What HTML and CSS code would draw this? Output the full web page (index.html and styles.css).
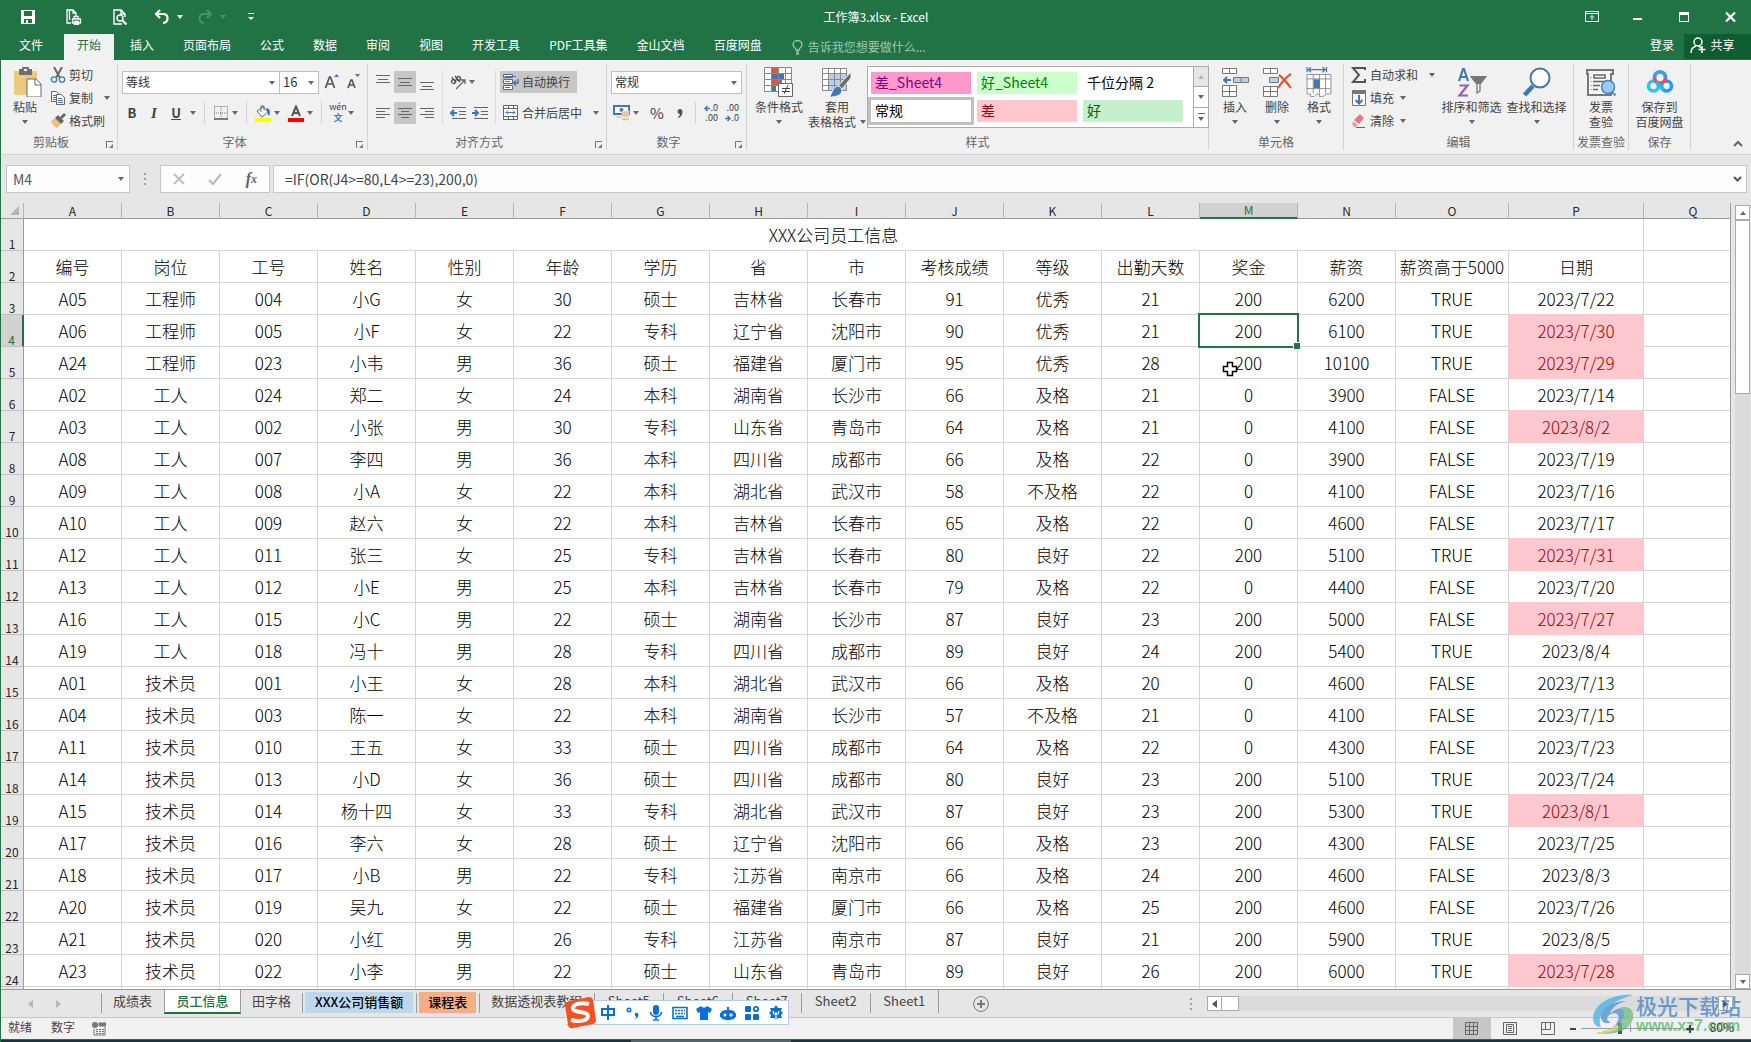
FILE: index.html
```html
<!DOCTYPE html>
<html lang="zh-CN">
<head>
<meta charset="utf-8">
<title>工作簿3.xlsx - Excel</title>
<link rel="stylesheet" href="styles.css">
</head>
<body>
<header class="titlebar">
  <div class="quick">
    <button class="ic" aria-label="保存"><svg width="16" height="16" viewBox="0 0 16 16"><path d="M1 1h14v14H1z" fill="#fff"/><path d="M4 2h8v5H4zM4 10h8v4H4z" fill="#217346"/><path d="M6 11h2v3H6z" fill="#fff"/></svg></button>
    <button class="ic" aria-label="打印预览"><svg width="16" height="16" viewBox="0 0 16 16" fill="none" stroke="#fff" stroke-width="1.3"><path d="M5 14H1V1h6l3 3v3M3.500 1v10M7 1v3h3"/><path d="M8 10V7.500h4V10M6.500 10h8v4h-8zM8.500 12.500h4v3h-4z"/></svg></button>
    <button class="ic" aria-label="查看"><svg width="16" height="16" viewBox="0 0 16 16" fill="none" stroke="#fff" stroke-width="1.400"><path d="M10 15H2V1h7l4 4v3M9 1v4h4"/><circle cx="8" cy="9" r="3"/><path d="M10 11l4.500 4.500" stroke-width="2.200"/></svg></button>
    <button class="ic undo" aria-label="撤消"><svg width="16" height="16" viewBox="0 0 16 16" fill="none" stroke="#fff" stroke-width="2.200"><path d="M6 1L2 5l4 4M2 5h7c6 0 6 8 0 9"/></svg></button>
    <i class="caret white"></i>
    <button class="ic redo" aria-label="恢复" disabled><svg width="16" height="16" viewBox="0 0 16 16" fill="none" stroke="#4f9069" stroke-width="2"><path d="M10 1l4 4-4 4M14 5H7c-6 0-6 8 0 9"/></svg></button>
    <i class="caret dim"></i>
    <button class="ic custom" aria-label="自定义快速访问工具栏"><svg width="6" height="8" viewBox="0 0 6 8"><path d="M0 0h6v1H0zM0 4h6L3 7z" fill="#fff"/></svg></button>
  </div>
  <h1 class="doc">工作簿3.xlsx - Excel</h1>
  <div class="winbtns">
    <button aria-label="功能区显示选项"><svg width="14" height="12" viewBox="0 0 14 12" fill="none" stroke="#fff"><path d="M.5.500h13v10H.5zM.5 2.500h13M7 9V5M5 6.500l2-2 2 2"/></svg></button>
    <button aria-label="最小化"><svg width="14" height="12" viewBox="0 0 14 12"><path d="M2 7h9v2H2z" fill="#fff"/></svg></button>
    <button aria-label="最大化"><svg width="14" height="12" viewBox="0 0 14 12"><path d="M2 1h10v10H2zM3 4v6h8V4z" fill="#fff" fill-rule="evenodd"/></svg></button>
    <button aria-label="关闭"><svg width="14" height="12" viewBox="0 0 14 12"><path d="M3 1.500l9 9M12 1.500l-9 9" stroke="#fff" stroke-width="2.200"/></svg></button>
  </div>
</header>

<nav class="tabs">
  <button class="tab file">文件</button>
  <button class="tab on">开始</button>
  <button class="tab">插入</button>
  <button class="tab">页面布局</button>
  <button class="tab">公式</button>
  <button class="tab">数据</button>
  <button class="tab">审阅</button>
  <button class="tab">视图</button>
  <button class="tab">开发工具</button>
  <button class="tab">PDF工具集</button>
  <button class="tab">金山文档</button>
  <button class="tab">百度网盘</button>
  <label class="tell"><svg width="12" height="15" viewBox="0 0 12 15" fill="none" stroke="#9fc7ae" stroke-width="1.300"><path d="M4 10c0-2-3-2.500-3-5.500a4.500 4 0 0 1 9 0C10 7.500 7 8 7 10zM4 12h3M4 14h3"/></svg><input type="text" placeholder="告诉我您想要做什么..." aria-label="告诉我您想要做什么"></label>
  <button class="login">登录</button>
  <button class="share"><svg width="16" height="17" viewBox="0 0 16 17" fill="none" stroke="#fff" stroke-width="1.500"><circle cx="8" cy="5" r="4"/><path d="M1 16c0-4 2-6 5-7M9 9l2 2M12 9v7M8.500 12.500h7"/></svg>共享</button>
</nav>

<section class="ribbon">
  <div class="group g-clip">
    <div class="body">
      <button class="big paste"><svg width="30" height="30" viewBox="0 0 30 30"><path d="M1 4h23v24H1z" fill="#edc87e"/><path d="M6 2h3a3 3 0 0 1 7 0h3v6H6z" fill="#6e6e6e"/><path d="M11 2h3v2h-3z" fill="#f1f1f1"/><path d="M14 12h9l5 5v13H14z" fill="#fff" stroke="#6e6e6e"/><path d="M22 12v6h6" fill="none" stroke="#6e6e6e"/></svg><span>粘贴</span><i class="caret"></i></button>
      <div class="stack">
        <button class="sm"><svg width="16" height="16" viewBox="0 0 16 16" fill="none"><path d="M4 0l6 11M12 0L6 11" stroke="#666" stroke-width="2"/><circle cx="4" cy="12.500" r="2.700" stroke="#3f78b5" stroke-width="1.300"/><circle cx="12" cy="12.500" r="2.700" stroke="#3f78b5" stroke-width="1.300"/></svg>剪切</button>
        <button class="sm"><svg width="16" height="16" viewBox="0 0 16 16" fill="#fff" stroke="#666"><path d="M1.500 1.500h5l2 2v8h-7z"/><path d="M3 5.500h3M3 7.500h3M3 9.500h3" stroke="#3f78b5"/><path d="M6.500 4.500h5l3 3v7h-8z"/><path d="M8 8.500h4M8 10.500h5M8 12.500h5" stroke="#3f78b5"/></svg>复制<i class="caret far"></i></button>
        <button class="sm"><svg width="16" height="16" viewBox="0 0 16 16"><path d="M1 8l4-3 6 6-4 4C5 14 2 11 1 8z" fill="#edc07a"/><path d="M5 5l3-3 6 6-3 3z" fill="#666"/><path d="M10 4l4-4 2 2-4 4z" fill="#666"/></svg>格式刷</button>
      </div>
    </div>
    <div class="cap more">剪贴板<button class="launch" aria-label="剪贴板选项"></button></div>
  </div>

  <div class="group g-font">
    <div class="body rows">
      <div class="row">
        <span class="combo fontname"><select aria-label="字体"><option>等线</option></select></span><span class="combo fontsize"><select aria-label="字号"><option>16</option></select></span>
        <button class="ib grow" aria-label="增大字号"><svg width="16" height="16" viewBox="0 0 16 16"><path d="M1.500 14L5.500 3h1l4 11M3 10h6" fill="none" stroke="#555" stroke-width="1.700"/><path d="M10 3h5l-2.500-3z" fill="#3f78b5"/></svg></button>
        <button class="ib" aria-label="减小字号"><svg width="16" height="16" viewBox="0 0 16 16"><path d="M2 14l3-8h1l3 8M3 11h5" fill="none" stroke="#555" stroke-width="1.600"/><path d="M9 0h5l-2.500 3z" fill="#3f78b5"/></svg></button>
      </div>
      <div class="row">
        <button class="ib b">B</button><button class="ib i">I</button><button class="ib u">U</button><i class="caret"></i>
        <span class="sep"></span>
        <button class="ib" aria-label="边框"><svg width="14" height="14" viewBox="0 0 14 14"><path d="M.5.500h13v13M.5.500v13M7 0v13M0 7h13" fill="none" stroke="#777" stroke-dasharray="1 1"/><path d="M0 13h14" stroke="#555" stroke-width="1.500"/></svg></button><i class="caret"></i>
        <span class="sep"></span>
        <button class="ib" aria-label="填充颜色"><svg width="16" height="17" viewBox="0 0 16 17"><path d="M2 6l6-4 5 5-6 5z" fill="#fff" stroke="#666"/><path d="M6 7V1h3v4" fill="none" stroke="#666"/><path d="M11 3c4 0 5 4 3 8-1 0-1-3-3-8z" fill="#3f78b5"/><path d="M0 13h16v4H0z" fill="#ff0"/></svg></button><i class="caret"></i>
        <button class="ib fc" aria-label="字体颜色"><svg width="16" height="17" viewBox="0 0 16 17"><path d="M4 11L8 1.500 12 11M5.500 8h5" fill="none" stroke="#555" stroke-width="2"/><path d="M0 13h16v4H0z" fill="red"/></svg></button><i class="caret"></i>
        <span class="sep"></span>
        <button class="ib wen" aria-label="拼音指南"><small>wén</small><small class="zh">文</small></button><i class="caret"></i>
      </div>
    </div>
    <div class="cap more">字体<button class="launch" aria-label="字体选项"></button></div>
  </div>

  <div class="group g-align">
    <div class="body">
      <div class="rows">
        <div class="row">
          <button class="ab" aria-label="顶端对齐"><svg width="14" height="16" viewBox="0 0 14 16" stroke="#666"><path d="M0 1.500h14M2 5.500h10M0 8.500h14"/></svg></button>
          <button class="ab on" aria-label="垂直居中"><svg width="14" height="16" viewBox="0 0 14 16" stroke="#666"><path d="M0 4.500h14M2 8.500h10M0 11.500h14"/></svg></button>
          <button class="ab" aria-label="底端对齐"><svg width="14" height="16" viewBox="0 0 14 16" stroke="#666"><path d="M0 8.500h14M2 12.500h10M0 15.500h14"/></svg></button>
        </div>
        <div class="row">
          <button class="ab" aria-label="左对齐"><svg width="14" height="16" viewBox="0 0 14 16" stroke="#666"><path d="M0 3.500h14M0 6.500h9M0 9.500h14M0 12.500h9"/></svg></button>
          <button class="ab on" aria-label="居中"><svg width="14" height="16" viewBox="0 0 14 16" stroke="#666"><path d="M0 3.500h14M3 6.500h8M0 9.500h14M3 12.500h8"/></svg></button>
          <button class="ab" aria-label="右对齐"><svg width="14" height="16" viewBox="0 0 14 16" stroke="#666"><path d="M0 3.500h14M5 6.500h9M0 9.500h14M5 12.500h9"/></svg></button>
        </div>
      </div>
      <span class="vsep"></span>
      <div class="rows">
        <div class="row">
          <button class="ab" aria-label="方向"><svg width="16" height="16" viewBox="0 0 16 16" fill="none" stroke="#555" stroke-width="1.300"><circle cx="3.500" cy="7.500" r="2"/><path d="M2 3l4 6M5 2l5 6"/><circle cx="8.500" cy="4.500" r="2"/><path d="M6 15l9-9M11 6h4v4" stroke="#666"/></svg></button><i class="caret"></i>
        </div>
        <div class="row">
          <button class="ab" aria-label="减少缩进"><svg width="16" height="14" viewBox="0 0 16 14"><path d="M2 1.500h14M9 5.500h7M9 8.500h7M2 12.500h14" stroke="#666"/><path d="M7 7H1M4 4L1 7l3 3" fill="none" stroke="#3f78b5" stroke-width="2"/></svg></button>
          <button class="ab" aria-label="增加缩进"><svg width="16" height="14" viewBox="0 0 16 14"><path d="M2 1.500h14M9 5.500h7M9 8.500h7M2 12.500h14" stroke="#666"/><path d="M0 7h6M3 4l3 3-3 3" fill="none" stroke="#3f78b5" stroke-width="2"/></svg></button>
        </div>
      </div>
      <span class="vsep"></span>
      <div class="rows">
        <button class="sm wrap on"><svg width="16" height="16" viewBox="0 0 16 16" fill="#fff" stroke="#666"><path d="M.5.500h9v3h-9zM.5 5.500h9v4h-9zM.5 11.500h9v4h-9z"/><path d="M2 2.500h11M2 7.500h5M2 13.500h5" stroke="#3f78b5"/><path d="M15 5v4h-4M13 6.500L10.500 9l2.500 2.500" fill="none" stroke="#3f78b5" stroke-width="1.500"/></svg>自动换行</button>
        <button class="sm wrap"><svg width="16" height="16" viewBox="0 0 16 16" fill="#fff" stroke="#666"><path d="M.5.500h14v14H.5zM.5 3.500h14M.5 11.500h14M5.500.500v3M10.500.500v3M5.500 11.500v3M10.500 11.500v3"/><path d="M3 7.500h9M5 5.500l-2 2 2 2M10 5.500l2 2-2 2" fill="none" stroke="#3f78b5"/></svg>合并后居中<i class="caret far"></i></button>
      </div>
    </div>
    <div class="cap more">对齐方式<button class="launch" aria-label="对齐选项"></button></div>
  </div>

  <div class="group g-num">
    <div class="body rows">
      <div class="row"><span class="combo numfmt"><select aria-label="数字格式"><option>常规</option></select></span></div>
      <div class="row">
        <button class="ib" aria-label="会计数字格式"><svg width="18" height="16" viewBox="0 0 18 16"><path d="M1 1h15v8H1z" fill="#fff" stroke="#3f78b5" stroke-width="2"/><circle cx="8.500" cy="5" r="2" fill="#3f78b5"/><path d="M9 6h7v2.500H9zM9 9.500h7V12H9zM9 13h7v2.500H9zM3 11h6v2H3z" fill="#edc07a" stroke="#f1f1f1" stroke-width=".6"/></svg></button><i class="caret"></i>
        <button class="ib pct">%</button><button class="ib comma" aria-label="千位分隔样式"><svg width="6" height="9" viewBox="0 0 6 9"><path d="M3 0a2.500 2.500 0 0 1 2.500 3C5.500 6 4 8 1.500 9L1 8c1-.8 2-1.800 2-3A2.500 2.500 0 0 1 3 0z" fill="#555"/></svg></button>
        <span class="sep"></span>
        <button class="ib dec" aria-label="增加小数位数"><small><svg width="6" height="7" viewBox="0 0 6 7"><path d="M6 3.500H1M3.500 1L1 3.500 3.500 6" fill="none" stroke="#3f78b5" stroke-width="1.500"/></svg>.0</small><small>.00</small></button>
        <button class="ib dec" aria-label="减少小数位数"><small>.00</small><small><svg width="6" height="7" viewBox="0 0 6 7"><path d="M0 3.500h5M2.500 1L5 3.500 2.500 6" fill="none" stroke="#3f78b5" stroke-width="1.500"/></svg>.0</small></button>
      </div>
    </div>
    <div class="cap more">数字<button class="launch" aria-label="数字选项"></button></div>
  </div>

  <div class="group g-style">
    <div class="body">
      <button class="big cond"><svg width="30" height="30" viewBox="0 0 30 30"><path d="M.5.500h27v24H.5z" fill="#fff"/><path d="M8 1h6v5H8zM8 13h10v5H8z" fill="#d95b3a"/><path d="M8 7h12v5H8zM8 19h4v6H8z" fill="#3f78b5"/><path d="M.5.500h27v24H.5zM7.500.500v24M14.500.500v24M21.500.500v24M.5 6.500h27M.5 12.500h27M.5 18.500h27" fill="none" stroke="#888"/><path d="M14.500 16.500h14v13h-14z" fill="#fff" stroke="#666"/><path d="M18 21.500h8M18 24.500h8M24 18l-4 9" stroke="#444" fill="none"/></svg><span>条件格式</span><i class="caret"></i></button>
      <button class="big fmt"><svg width="30" height="30" viewBox="0 0 30 30"><path d="M.5 1.500h24v22H.5z" fill="#fff"/><path d="M6 7h19v17H6z" fill="#b9cfe8"/><path d="M.5 1.500h24v22H.5zM6.500 1.500v22M12.500 1.500v22M18.500 1.500v22M.5 6.500h24M.5 12.500h24M.5 18.500h24" fill="none" stroke="#888"/><path d="M29 5v6l-9 11-4-3z" fill="#6e6e6e" stroke="#f1f1f1"/><path d="M15 19c3 0 5 2 5 5-1 4-5 6-13 6 3-2 3-9 8-11z" fill="#3f78b5" stroke="#f1f1f1"/></svg><span>套用</span><span class="two">表格格式<i class="caret"></i></span></button>
      <div class="gallery">
        <div class="cells">
          <button class="st bad4">差_Sheet4</button><button class="st good4">好_Sheet4</button><button class="st">千位分隔 2</button>
          <button class="st sel">常规</button><button class="st bad">差</button><button class="st good">好</button>
        </div>
        <div class="gscroll"><button disabled aria-label="上"><i class="caret up"></i></button><button aria-label="下"><i class="caret"></i></button><button aria-label="其他"><i class="bar"></i><i class="caret"></i></button></div>
      </div>
    </div>
    <div class="cap">样式</div>
  </div>

  <div class="group g-cells">
    <div class="body">
      <button class="big"><svg width="30" height="30" viewBox="0 0 30 30" fill="#fff" stroke="#777"><path d="M2.500 1.500h14v5h-14zM9.500 1.500v5M2.500 18.500h14v11h-14zM9.500 18.500v11M2.500 24.500h14"/><path d="M13.500 10.500h15v5h-15zM21 10.500v5" fill="#b9cfe8"/><path d="M11 13H4M7 10l-3 3 3 3" fill="none" stroke="#3f78b5" stroke-width="1.800"/></svg><span>插入</span><i class="caret"></i></button>
      <button class="big"><svg width="30" height="30" viewBox="0 0 30 30" fill="#fff" stroke="#777"><path d="M1.500 1.500h14v5h-14zM8.500 1.500v5M1.500 19.500h14v10h-14zM8.500 19.500v10M1.500 24.500h14"/><path d="M7.500 10.500h9v5h-9z" fill="#b9cfe8"/><path d="M17 8c4 3 9 9 12 13M29 7c-5 3-9 8-13 14" fill="none" stroke="#d95b3a" stroke-width="2.200"/></svg><span>删除</span><i class="caret"></i></button>
      <button class="big"><svg width="30" height="34" viewBox="0 0 30 34" fill="#fff" stroke="#888"><path d="M1.500 0v6M23.500 0v6M3 3h19M6 0L3 3l3 3M19 0l3 3-3 3" fill="none" stroke="#3f78b5" stroke-width="1.400"/><path d="M1.500 8.500h27v22h-5l-4 3h-4v-3h-3l-3 3h-4v-3h-4zM8.500 8v22M15.500 8v22M22.500 8v22M1 13.500h27M1 24.500h27"/><path d="M9 14h7v10H9z" fill="#3f78b5" stroke="none"/></svg><span>格式</span><i class="caret"></i></button>
    </div>
    <div class="cap">单元格</div>
  </div>

  <div class="group g-edit">
    <div class="body">
      <div class="stack">
        <button class="sm"><svg width="16" height="16" viewBox="0 0 16 16"><path d="M14 3V1H2l6 7-6 7h12v-3" fill="none" stroke="#555" stroke-width="2"/></svg>自动求和<i class="caret far"></i></button>
        <button class="sm"><svg width="16" height="16" viewBox="0 0 16 16"><path d="M1.500.500h13v15h-13z" fill="#fff" stroke="#777"/><path d="M1 0h14v4H1z" fill="#777"/><path d="M8 5v8M4.500 10L8 13.500 11.500 10" fill="none" stroke="#3f78b5" stroke-width="2"/></svg>填充<i class="caret"></i></button>
        <button class="sm"><svg width="16" height="16" viewBox="0 0 16 16"><path d="M9 1l4 4-5 6-5-4z" fill="#e2788a"/><path d="M2.500 8L7 12l-2 2H3l-2-3z" fill="#ef9fab"/><path d="M5 14.500h9" stroke="#666"/></svg>清除<i class="caret"></i></button>
      </div>
      <button class="big wide"><svg width="32" height="30" viewBox="0 0 32 30" fill="none"><path d="M3 14L7 2h1l4 12M4.500 10h6" stroke="#3f78b5" stroke-width="2.200"/><path d="M3.500 18.500h8l-8 10h8.500" stroke="#9260b5" stroke-width="2.200"/><path d="M14 9h17l-6 8H20z" fill="#777"/><path d="M15 9.500l6 7V26l3-2v-8l6-6.500" stroke="#777" stroke-width="1.300"/></svg><span>排序和筛选</span><i class="caret"></i></button>
      <button class="big wide"><svg width="30" height="30" viewBox="0 0 30 30"><path d="M11 19L2.500 28" stroke="#3f78b5" stroke-width="4.500"/><circle cx="18" cy="11" r="9.500" fill="#fff" stroke="#3f78b5" stroke-width="2"/></svg><span>查找和选择</span><i class="caret"></i></button>
    </div>
    <div class="cap">编辑</div>
  </div>

  <div class="group g-inv">
    <div class="body"><button class="big"><svg width="32" height="30" viewBox="0 0 32 30"><path d="M2 3h26v4h-2v21H3V7H2z" fill="#f6f6f6" stroke="#777" stroke-width="2"/><path d="M9 8h11v3H9z" fill="#fff" stroke="#666" stroke-width="1.500"/><path d="M8 14.500h12M8 18.500h7M8 22.500h5" stroke="#666" stroke-width="1.500"/><path d="M6 10v15" stroke="#777" stroke-dasharray="1 3"/><circle cx="23" cy="20" r="6.500" fill="#9cc9f7" stroke="#4a86ba" stroke-width="1.500"/><path d="M27 25l3.500 3.500" stroke="#4a86ba" stroke-width="2"/></svg><span>发票</span><span class="two">查验</span></button></div>
    <div class="cap">发票查验</div>
  </div>
  <div class="group g-save">
    <div class="body"><button class="big"><svg width="30" height="30" viewBox="0 0 30 30" fill="none" stroke-width="3.600"><circle cx="8.500" cy="19" r="5" stroke="#38bdf0"/><circle cx="21.500" cy="19" r="5" stroke="#1f9cf5"/><circle cx="15" cy="10.500" r="5.500" stroke="#ee4a68"/><path d="M9.500 10.500a5.500 5.500 0 0 1 11 0" stroke="#2ea5ef"/><path d="M11 15l8 8" stroke="#2db4f3"/></svg><span>保存到</span><span class="two">百度网盘</span></button></div>
    <div class="cap">保存</div>
  </div>
  <button class="collapse" aria-label="折叠功能区"><svg width="10" height="7" viewBox="0 0 10 7"><path d="M1 6l4-4 4 4" fill="none" stroke="#666" stroke-width="2"/></svg></button>
</section>

<section class="formula">
  <span class="namebox"><input type="text" value="M4" aria-label="名称框"><i class="caret"></i></span>
  <i class="dots"></i>
  <div class="fbtns">
    <button aria-label="取消"><svg width="12" height="12" viewBox="0 0 12 12"><path d="M1 1l10 10M11 1L1 11" stroke="#bbb" stroke-width="1.800"/></svg></button>
    <button aria-label="输入"><svg width="14" height="12" viewBox="0 0 14 12"><path d="M1 7l4 4 8-10" fill="none" stroke="#bbb" stroke-width="2.200"/></svg></button>
    <button class="fx" aria-label="插入函数">f<sub>x</sub></button>
  </div>
  <div class="fedit"><input type="text" value="=IF(OR(J4&gt;=80,L4&gt;=23),200,0)" aria-label="编辑栏"><svg width="9" height="6" viewBox="0 0 9 6"><path d="M1 1l3.500 3.500L8 1" fill="none" stroke="#555" stroke-width="2"/></svg></div>
</section>

<main class="work">
  <div class="grid">
<table>
<colgroup><col class="c-head"><col class="c" span="14"><col class="c-o"><col class="c-p"><col></colgroup>
<thead><tr><th class="corner"><svg width="10" height="9" viewBox="0 0 10 9"><path d="M9 0v9H0z" fill="#b5b5b5"/></svg><th>A<th>B<th>C<th>D<th>E<th>F<th>G<th>H<th>I<th>J<th>K<th>L<th class="cur">M<th>N<th>O<th>P<th>Q</tr></thead>
<tbody>
<tr><th>1<td colspan="16">XXX公司员工信息<td></tr>
<tr><th>2<td>编号<td>岗位<td>工号<td>姓名<td>性别<td>年龄<td>学历<td>省<td>市<td>考核成绩<td>等级<td>出勤天数<td>奖金<td>薪资<td>薪资高于5000<td>日期<td></tr>
<tr><th>3<td>A05<td>工程师<td>004<td>小G<td>女<td>30<td>硕士<td>吉林省<td>长春市<td>91<td>优秀<td>21<td>200<td>6200<td>TRUE<td>2023/7/22<td></tr>
<tr><th class="cur">4<td>A06<td>工程师<td>005<td>小F<td>女<td>22<td>专科<td>辽宁省<td>沈阳市<td>90<td>优秀<td>21<td class="active">200<td>6100<td>TRUE<td class="hot">2023/7/30<td></tr>
<tr><th>5<td>A24<td>工程师<td>023<td>小韦<td>男<td>36<td>硕士<td>福建省<td>厦门市<td>95<td>优秀<td>28<td class="point">200<svg class="pointer" width="16" height="16" viewBox="0 0 16 16"><path d="M5.500 1.500h5v4h4v5h-4v4h-5v-4h-4v-5h4z" fill="#fff" stroke="#000" stroke-width="1.500"/></svg><td>10100<td>TRUE<td class="hot">2023/7/29<td></tr>
<tr><th>6<td>A02<td>工人<td>024<td>郑二<td>女<td>24<td>本科<td>湖南省<td>长沙市<td>66<td>及格<td>21<td>0<td>3900<td>FALSE<td>2023/7/14<td></tr>
<tr><th>7<td>A03<td>工人<td>002<td>小张<td>男<td>30<td>专科<td>山东省<td>青岛市<td>64<td>及格<td>21<td>0<td>4100<td>FALSE<td class="hot">2023/8/2<td></tr>
<tr><th>8<td>A08<td>工人<td>007<td>李四<td>男<td>36<td>本科<td>四川省<td>成都市<td>66<td>及格<td>22<td>0<td>3900<td>FALSE<td>2023/7/19<td></tr>
<tr><th>9<td>A09<td>工人<td>008<td>小A<td>女<td>22<td>本科<td>湖北省<td>武汉市<td>58<td>不及格<td>22<td>0<td>4100<td>FALSE<td>2023/7/16<td></tr>
<tr><th>10<td>A10<td>工人<td>009<td>赵六<td>女<td>22<td>本科<td>吉林省<td>长春市<td>65<td>及格<td>22<td>0<td>4600<td>FALSE<td>2023/7/17<td></tr>
<tr><th>11<td>A12<td>工人<td>011<td>张三<td>女<td>25<td>专科<td>吉林省<td>长春市<td>80<td>良好<td>22<td>200<td>5100<td>TRUE<td class="hot">2023/7/31<td></tr>
<tr><th>12<td>A13<td>工人<td>012<td>小E<td>男<td>25<td>本科<td>吉林省<td>长春市<td>79<td>及格<td>22<td>0<td>4400<td>FALSE<td>2023/7/20<td></tr>
<tr><th>13<td>A16<td>工人<td>015<td>小C<td>男<td>22<td>硕士<td>湖南省<td>长沙市<td>87<td>良好<td>23<td>200<td>5000<td>FALSE<td class="hot">2023/7/27<td></tr>
<tr><th>14<td>A19<td>工人<td>018<td>冯十<td>男<td>28<td>专科<td>四川省<td>成都市<td>89<td>良好<td>24<td>200<td>5400<td>TRUE<td>2023/8/4<td></tr>
<tr><th>15<td>A01<td>技术员<td>001<td>小王<td>女<td>28<td>本科<td>湖北省<td>武汉市<td>66<td>及格<td>20<td>0<td>4600<td>FALSE<td>2023/7/13<td></tr>
<tr><th>16<td>A04<td>技术员<td>003<td>陈一<td>女<td>22<td>本科<td>湖南省<td>长沙市<td>57<td>不及格<td>21<td>0<td>4100<td>FALSE<td>2023/7/15<td></tr>
<tr><th>17<td>A11<td>技术员<td>010<td>王五<td>女<td>33<td>硕士<td>四川省<td>成都市<td>64<td>及格<td>22<td>0<td>4300<td>FALSE<td>2023/7/23<td></tr>
<tr><th>18<td>A14<td>技术员<td>013<td>小D<td>女<td>36<td>硕士<td>四川省<td>成都市<td>80<td>良好<td>23<td>200<td>5100<td>TRUE<td>2023/7/24<td></tr>
<tr><th>19<td>A15<td>技术员<td>014<td>杨十四<td>女<td>33<td>专科<td>湖北省<td>武汉市<td>87<td>良好<td>23<td>200<td>5300<td>TRUE<td class="hot">2023/8/1<td></tr>
<tr><th>20<td>A17<td>技术员<td>016<td>李六<td>女<td>28<td>硕士<td>辽宁省<td>沈阳市<td>66<td>及格<td>23<td>200<td>4300<td>FALSE<td>2023/7/25<td></tr>
<tr><th>21<td>A18<td>技术员<td>017<td>小B<td>男<td>22<td>专科<td>江苏省<td>南京市<td>66<td>及格<td>24<td>200<td>4600<td>FALSE<td>2023/8/3<td></tr>
<tr><th>22<td>A20<td>技术员<td>019<td>吴九<td>女<td>22<td>硕士<td>福建省<td>厦门市<td>66<td>及格<td>25<td>200<td>4600<td>FALSE<td>2023/7/26<td></tr>
<tr><th>23<td>A21<td>技术员<td>020<td>小红<td>男<td>26<td>专科<td>江苏省<td>南京市<td>87<td>良好<td>21<td>200<td>5900<td>TRUE<td>2023/8/5<td></tr>
<tr><th>24<td>A23<td>技术员<td>022<td>小李<td>男<td>22<td>硕士<td>山东省<td>青岛市<td>89<td>良好<td>26<td>200<td>6000<td>TRUE<td class="hot">2023/7/28<td></tr>
<tr><th><td><td><td><td><td><td><td><td><td><td><td><td><td><td><td><td><td></tr>
</tbody>
</table>
  </div>
  <div class="vscroll"><button aria-label="向上滚动"><i class="caret up"></i></button><span class="thumb"></span><button class="down" aria-label="向下滚动"><i class="caret"></i></button></div>
</main>

<nav class="sheets">
  <div class="nav"><button aria-label="上一个"><svg width="5" height="8" viewBox="0 0 5 8"><path d="M5 0v8L0 4z" fill="#b5b5b5"/></svg></button><button aria-label="下一个"><svg width="5" height="8" viewBox="0 0 5 8"><path d="M0 0v8l5-4z" fill="#b5b5b5"/></svg></button></div>
  <button class="sheet">成绩表</button>
  <button class="sheet cur">员工信息</button>
  <button class="sheet">田字格</button>
  <button class="sheet blue"><span>XXX公司销售额</span></button>
  <button class="sheet orange"><span>课程表</span></button>
  <button class="sheet">数据透视表教程</button>
  <button class="sheet n">Sheet5</button>
  <button class="sheet n">Sheet6</button>
  <button class="sheet n">Sheet7</button>
  <button class="sheet n">Sheet2</button>
  <button class="sheet n last">Sheet1</button>
  <button class="add" aria-label="新工作表"><svg width="16" height="16" viewBox="0 0 16 16" fill="none" stroke="#777"><circle cx="8" cy="8" r="7.400"/><path d="M8 4v8M4 8h8" stroke-width="2"/></svg></button>
  <i class="dots"></i>
  <div class="hscroll"><button aria-label="向左滚动"><svg width="5" height="8" viewBox="0 0 5 8"><path d="M5 0v8L0 4z" fill="#555"/></svg></button><span class="thumb"></span><button class="right" aria-label="向右滚动"><svg width="5" height="8" viewBox="0 0 5 8"><path d="M0 0v8l5-4z" fill="#555"/></svg></button></div>
</nav>

<footer class="status">
  <span>就绪</span><span>数字</span>
  <svg class="macro" width="14" height="14" viewBox="0 0 14 14"><circle cx="3" cy="3" r="3" fill="#777"/><path d="M7 1h7v3H7zM2 7v6h11V5" fill="none" stroke="#777"/><path d="M7 1h7v3H7z" fill="#777"/><path d="M4 7.500h8M4 9.500h8M4 11.500h8" stroke="#777" stroke-dasharray="2 1"/></svg>
  <div class="views">
    <button class="on" aria-label="普通"><svg width="13" height="13" viewBox="0 0 13 13" fill="none" stroke="#666"><path d="M.5.500h12v12H.5zM4.500 0v13M8.500 0v13M0 4.500h13M0 8.500h13"/></svg></button>
    <button aria-label="页面布局"><svg width="14" height="13" viewBox="0 0 14 13" fill="none" stroke="#666"><path d="M.5.500h13v12H.5zM3.500 2.500h7v8h-7zM5 4.500h4M5 6.500h4M5 8.500h4"/></svg></button>
    <button aria-label="分页预览"><svg width="14" height="13" viewBox="0 0 14 13" fill="none" stroke="#666"><path d="M.5.500h13v12H.5zM4.500.500v7M.5 7.500h8.500M9.500.500v7"/></svg></button>
  </div>
  <button class="z" aria-label="缩小"><svg width="8" height="8" viewBox="0 0 8 8"><path d="M1 3h6v2H1z" fill="#444"/></svg></button>
  <input class="zoom" type="range" min="10" max="190" value="80" aria-label="显示比例">
  <button class="z" aria-label="放大"><svg width="8" height="8" viewBox="0 0 8 8"><path d="M0 4h8M4 0v8" stroke="#444" stroke-width="2"/></svg></button>
  <button class="pc">80%</button>
</footer>
<div class="desk"><span></span></div>

<div class="ime">
  <svg class="slogo" width="32" height="32" viewBox="0 0 32 32"><path d="M5 4l20-4q3 0 4 3l3 20q0 3-3 4L9 31q-4 1-5-3L1 8q0-3 4-4z" fill="#f4511e"/><path d="M25 7C17 5 8 7 9 12c1 4 15 2 15 7 0 5-9 6-17 4" fill="none" stroke="#fff" stroke-width="4"/></svg>
  <svg width="16" height="16" viewBox="0 0 16 16" fill="none" stroke="#0a6fd8" stroke-width="2"><path d="M2 4h12v6H2zM8 0v15"/></svg>
  <svg width="16" height="16" viewBox="0 0 16 16"><circle cx="5" cy="5" r="1.700" fill="none" stroke="#0a6fd8" stroke-width="1.600"/><path d="M11 8h3c1 3 0 5-3 6 1-1 1.500-2 1-3h-1z" fill="#0a6fd8"/></svg>
  <svg width="16" height="16" viewBox="0 0 16 16"><path d="M5 3a3 3 0 0 1 6 0v4a3 3 0 0 1-6 0z" fill="#0a6fd8"/><path d="M2.500 7c0 6 11 6 11 0M8 11v3M5 15h6" fill="none" stroke="#0a6fd8" stroke-width="1.700"/></svg>
  <svg width="16" height="16" viewBox="0 0 16 16" fill="none" stroke="#0a6fd8" stroke-width="1.600"><path d="M1 2.500h14v11H1z"/><path d="M3 5.500h10M3 8.500h10" stroke-dasharray="2 1"/><path d="M4 11.500h8"/></svg>
  <svg width="16" height="16" viewBox="0 0 16 16"><path d="M5 1c1 2 5 2 6 0l5 3-2 4-2-1v8H4V7L2 8 0 4z" fill="#0a6fd8"/></svg>
  <svg width="16" height="16" viewBox="0 0 16 16"><path d="M7 2h2v3c4 0 6 1 6 3h1v4h-1c0 2-3 3-7 3s-7-1-7-3H0V8h1c0-2 2-3 6-3z" fill="#0a6fd8"/><circle cx="5" cy="10" r="1.500" fill="#fff"/><path d="M9 10h4M11 8v4" stroke="#fff"/></svg>
  <svg width="16" height="16" viewBox="0 0 16 16" fill="#0a6fd8"><rect x="1" y="1" width="6" height="6" rx="1"/><rect x="1" y="9" width="6" height="6" rx="1"/><rect x="9" y="9" width="6" height="6" rx="1"/><circle cx="12" cy="4" r="2.200" fill="none" stroke="#0a6fd8" stroke-width="1.800"/></svg>
  <svg width="16" height="16" viewBox="0 0 16 16"><path d="M8 0l2 3h4l-1 3 2 2-2 2 1 3h-4l-2 2-2-2H2l1-3-2-2 2-2-1-3h4z" fill="#0a6fd8"/><path d="M8 15V7M5 6l1 3h4l1-3" fill="none" stroke="#fff" stroke-width="1.200"/></svg>
</div>

<div class="mark">
  <svg width="44" height="42" viewBox="0 0 44 42"><path d="M41 2C22 0 2 10 1 25c0 6 3 9 8 9C3 22 18 8 41 2z" fill="#45b0e6"/><path d="M34 8C22 8 9 15 9 24c0 5 5 8 10 5-5-1-5-6 0-8 5-2 9 1 7 6-2 7-10 11-20 13 18 3 34-4 35-16C41 15 35 13 29 15c-5 1-9 3-11 6 1-6 8-11 16-13z" fill="#4d8fcf"/><path d="M31 14c11 0 13 9 7 17-7 8-21 11-34 9 12-2 24-6 27-14 2-5 1-9-3-11z" fill="#6cc07a"/><path d="M4 40c8-1 16-4 20-8l4 2C22 39 12 41 4 40z" fill="#c9d94a"/></svg>
  <div><b>极光下载站</b><em>www.xz7.com</em></div>
</div>
</body>
</html>
```
FILE: styles.css
```css
* { box-sizing: border-box; }
html, body { height: 100%; }
body {
  margin: 0;
  display: flex;
  flex-direction: column;
  min-height: 0;
  overflow: hidden;
  position: relative;
  border-left: 1px solid #217346;
  background: #e6e6e6;
  font: 12px/16px "Noto Sans CJK SC", sans-serif;
  color: #444;
}
button, input, select { font: inherit; color: inherit; border: 0; background: none; padding: 0; margin: 0; border-radius: 0; }
button { display: flex; align-items: center; justify-content: center; white-space: nowrap; flex: none; }
svg { display: block; flex: none; }

.caret { flex: none; width: 0; height: 0; border: 3px solid transparent; border-top: 4px solid #666; border-bottom: 0; }
.caret.white { border-top-color: #fff; }
.caret.dim { border-top-color: #4f9069; }
.caret.up { border-top: 0; border-bottom: 4px solid #666; }

/* Title bar */
.titlebar { flex: none; height: 34px; background: #217346; color: #fff; display: grid; grid-template-columns: 1fr auto 1fr; align-items: center; }
.quick { display: flex; align-items: center; padding-left: 19px; height: 32px; }
.quick .ic { margin-right: 30px; }
.quick .ic:nth-child(3) { margin-right: 26px; }
.quick .undo, .quick .redo { margin-right: 7px; }
.quick .caret { margin-right: 14px; }
.quick .dim { margin-right: 22px; }
.quick .custom { margin: 0; }
.doc { margin: 0; font-size: 12px; font-weight: 400; }
.winbtns { display: flex; justify-content: flex-end; gap: 4px; height: 32px; }
.winbtns button { width: 42px; }

/* Ribbon tabs */
.tabs { flex: none; height: 26px; background: #217346; color: #fff; display: flex; align-items: stretch; gap: 3px; }
.tab { padding: 0 13px 4px; }
.tab.file { width: 60px; }
.tab.on { background: #f1f1f1; color: #217346; }
.tell { display: flex; align-items: center; gap: 4px; margin-left: 14px; flex: 1; }
.tell input { width: 160px; outline: 0; }
.tell input::placeholder { color: #9fc7ae; opacity: 1; }
.login { padding: 0 7px 4px 0; }
.share { background: #0e5c2f; width: 67px; gap: 4px; padding: 0 10px 3px 0; margin-bottom: 1px; }

/* Ribbon */
.ribbon { flex: none; height: 95px; background: #f1f1f1; border-bottom: 1px solid #d2d2d2; display: flex; padding: 4px 0; overflow: hidden; }
.group { flex: none; height: 86px; border-right: 1px solid #d2d2d2; display: flex; flex-direction: column; }
.body { display: flex; height: 70px; }
.cap { display: flex; justify-content: center; align-items: center; height: 16px; color: #666; position: relative; }
.cap.more { padding-right: 16px; }
.launch { position: absolute; right: 4px; top: 7px; width: 7px; height: 7px; border-left: 1px solid #777; border-top: 1px solid #777; }
.launch::after { content: ""; position: absolute; right: 0; bottom: 0; border: 2px solid #777; border-top-color: transparent; border-left-color: transparent; }
.g-clip { width: 117px; }
.g-font { width: 250px; }
.g-align { width: 239px; }
.g-num { width: 140px; }
.g-style { width: 462px; }
.g-cells { width: 135px; }
.g-edit { width: 230px; }
.g-inv { width: 55px; }
.g-save { width: 62px; }
.g-cells .body, .g-inv .body, .g-save .body { justify-content: center; }
.g-cells .body { padding-left: 2px; }

.big { flex-direction: column; justify-content: flex-start; width: 42px; padding-top: 3px; line-height: 15px; }
.big span { margin-top: 2px; }
.big svg { height: 30px; }
.big .caret { margin-top: 6px; }
.big .two { margin-top: 0; display: flex; align-items: center; gap: 4px; }
.two .caret { margin-top: 0; }
.big.wide { width: 65px; }
.g-inv .big, .g-save .big { width: 54px; }
.stack { display: flex; flex-direction: column; align-items: flex-start; }
.sm { height: 23px; gap: 3px; padding-bottom: 2px; color: #444; }
.sm .caret { margin-left: 3px; }
.sm .caret.far { margin-left: 8px; }
.paste { width: 48px; padding-left: 6px; }
.paste span, .paste .caret { margin-right: 6px; }
.g-clip .stack { padding-left: 1px; }

.rows { display: flex; flex-direction: column; gap: 9px; padding-top: 7px; }
.row { display: flex; align-items: center; height: 22px; }
.ib { width: 22px; height: 22px; }
.sep { width: 1px; height: 22px; background: #d2d2d2; margin: 0 5px 0 7px; }
.combo { position: relative; display: block; height: 23px; border: 1px solid #c0c0c0; background: #fff; }
.combo select { appearance: none; width: 100%; height: 21px; padding-left: 3px; line-height: 20px; color: #333; }
.combo::after { content: ""; position: absolute; right: 4px; top: 9px; border: 3px solid transparent; border-top: 4px solid #666; border-bottom: 0; pointer-events: none; }
.fontname { width: 158px; }
.fontsize { width: 40px; margin-left: -1px; font-size: 13px; }
.g-font .rows, .g-font .body { padding-left: 4px; }
.grow { margin-left: 2px; }
.b, .i, .u { font-size: 13px; font-weight: 700; }
.b { margin-left: -1px; }
.i { font-style: italic; font-family: "Liberation Serif", serif; font-size: 15px; }
.u { text-decoration: underline; }
.g-font .sep { margin: 0 5px 0 8px; }
.g-font .u + .caret { margin-left: 3px; }
.fc { margin-left: 5px; }
.fc + .caret + .sep { margin-right: 6px; }
.wen { flex-direction: column; width: 20px; }
.wen small { font-size: 9px; line-height: 10px; }
.wen .zh { color: #3f78b5; font-weight: 700; line-height: 12px; }

.g-align .rows { padding-left: 4px; }
.ab { width: 22px; height: 22px; }
.ab.on, .wrap.on { background: #c6c6c6; }
.vsep { width: 1px; height: 54px; margin-top: 6px; margin-left: 4px; background: #dcdcdc; }
.wrap { height: 22px; padding: 0 7px 0 3px; align-self: flex-start; }
.g-num .rows, .g-num .body { padding-left: 4px; }
.numfmt { width: 131px; }
.pct { font-size: 15px; width: 26px; margin-left: 5px; }
.g-num .comma { width: 20px; }
.g-num .sep { margin: 0 6px 0 5px; }
.dec { flex-direction: column; align-items: flex-end; width: 16px; margin-right: 5px; }
.dec small { display: flex; align-items: center; gap: 1px; font-size: 9px; line-height: 10px; }

.cond { width: 62px; margin-left: 1px; }
.fmt { width: 54px; margin-right: 2px; }
.gallery { display: flex; height: 62px; margin-top: 2px; margin-left: 1px; border: 1px solid #ababab; background: #fff; }
.cells { display: grid; grid-template-columns: repeat(3, 100px); grid-auto-rows: 22px; gap: 6px; padding: 5px 3px; }
.st { justify-content: flex-start; padding: 0 0 2px 4px; font-size: 14px; color: #000; }
.st.bad4 { background: #ff99cc; color: #800080; }
.st.good4 { background: #ccffcc; color: #008000; }
.st.bad { background: #ffc7ce; color: #9c0006; }
.st.good { background: #c6efce; color: #006100; }
.st.sel { outline: 3px solid #c0c0c0; }
.gscroll { width: 15px; margin-left: 7px; display: flex; flex-direction: column; border-left: 1px solid #ababab; }
.gscroll button { flex: 1; flex-direction: column; gap: 3px; border-bottom: 1px solid #ababab; }
.gscroll button:last-child { border: 0; }
.gscroll button:disabled { background: #e6e6e6; }
.gscroll button:disabled .caret { border-bottom-color: #b5b5b5; }
.bar { width: 7px; height: 1px; background: #666; }
.g-edit .body { padding-left: 7px; }
.g-edit .stack { width: 88px; }
.collapse { margin-left: auto; margin-right: 8px; align-self: flex-end; height: 14px; }

/* Formula bar */
.formula { flex: none; height: 48px; display: flex; padding: 10px 4px 10px 5px; }
.namebox, .fbtns, .fedit { display: flex; align-items: center; background: #fdfdfd; border: 1px solid #c6c6c6; height: 28px; font-size: 14px; }
.namebox { width: 124px; padding: 0 5px 0 6px; }
.namebox input { flex: 1; min-width: 0; color: #555; }
.dots { flex: none; width: 2px; height: 12px; margin: 8px 14px; background: repeating-linear-gradient(#a0a0a0 0 2px, transparent 2px 5px); }
.fbtns { width: 110px; justify-content: space-between; padding: 0 12px; margin-right: 3px; }
.fx { font: italic 700 16px/20px "Liberation Serif", serif; color: #666; }
.fx sub { font-size: 12px; line-height: 10px; }
.fedit { flex: 1; padding: 0 4px 0 11px; }
.fedit input { flex: 1; color: #444; outline: 0; }

/* Grid */
.work { flex: 1; min-height: 0; display: flex; }
.grid { flex: 1; min-width: 0; overflow: hidden; border-right: 1px solid #9b9b9b; background: #fff; }
table { width: 1741px; min-width: 100%; table-layout: fixed; border-collapse: separate; border-spacing: 0; }
.c-head { width: 23px; }
.c { width: 98px; }
.c-o { width: 113px; }
.c-p { width: 135px; }
th { padding: 0; background: #e6e6e6; font-size: 12px; line-height: 15px; font-weight: 400; color: #262626; }
thead th { height: 16px; border-right: 1px solid #b5b5b5; border-bottom: 1px solid #9b9b9b; }
thead .cur { background: #d2d2d2; color: #217346; border-bottom: 2px solid #217346; line-height: 14px; }
thead th:last-child { border-right: 0; }
.corner { vertical-align: middle; }
.corner svg { margin-left: auto; margin-right: 3px; }
tbody th { vertical-align: bottom; line-height: 13px; border-right: 1px solid #9b9b9b; border-bottom: 1px solid #c0c0c0; }
tbody .cur { background: #d2d2d2; color: #217346; border-right: 2px solid #217346; }
td { height: 32px; padding: 0; text-align: center; font-size: 17px; line-height: 24px; font-weight: 300; color: #000; border-right: 1px solid #d4d4d4; border-bottom: 1px solid #d4d4d4; white-space: nowrap; }
td:last-child { border-right: 0; }
.hot { background: #ffc7ce; color: #9c0006; border-color: #ffc7ce; box-shadow: -1px -1px 0 #ffc7ce; }
.active, .point { position: relative; }
.active { z-index: 1; }
.active::before { content: ""; position: absolute; inset: -2px; border: 2px solid #217346; }
.active::after { content: ""; position: absolute; right: -3px; bottom: -3px; width: 6px; height: 6px; background: #217346; border: solid #fff; border-width: 1px 0 0 1px; }
.pointer { position: absolute; left: 22px; top: 14px; }

.vscroll { width: 20px; padding: 2px 1px 0 4px; background: linear-gradient(#dbdbdb, #dbdbdb) 4px 2px / 15px 100% no-repeat; display: flex; flex-direction: column; }
.vscroll button { height: 15px; background: #fff; border: 1px solid #ababab; }
.vscroll .thumb { height: 174px; background: #fff; border: 1px solid #ababab; }
.vscroll .down { margin-top: auto; }

/* Sheet tabs */
.sheets { flex: none; height: 28px; display: flex; border-top: 1px solid #9b9b9b; }
.nav { width: 100px; display: flex; align-items: center; gap: 23px; padding-left: 27px; }
.sheet { height: 23px; padding: 0 12px 2px; font-size: 13px; position: relative; }
.sheet::before { content: ""; position: absolute; left: 0; top: 3px; height: 20px; width: 1px; background: #9b9b9b; }
.sheet.cur { height: 24px; width: 77px; padding: 0; background: #fff; color: #217346; font-weight: 500; border: solid #9b9b9b; border-width: 0 1px; border-bottom: 2px solid #217346; }
.sheet.cur::before, .cur + .sheet::before { display: none; }
.cur + .sheet { padding: 0 11px 2px; }
.sheet.blue, .sheet.orange { padding: 2px 3px 0; color: #000; font-weight: 500; }
.sheet.blue span { background: #bdd7ee; padding: 0 10px 2px; line-height: 19px; }
.sheet.orange span { background: #f4b084; padding: 0 9px 2px; line-height: 19px; }
.sheet.n { width: 69px; }
.sheet.last { border-right: 1px solid #9b9b9b; }
.add { margin-left: 34px; width: 16px; }
.sheets .dots { margin-left: auto; margin-right: 15px; }
.hscroll { width: 526px; height: 15px; margin: 6px 18px 0 0; background: #dbdbdb; display: flex; }
.hscroll button { width: 15px; background: #fff; border: 1px solid #ababab; }
.hscroll .thumb { width: 17px; background: #fff; border: 1px solid #ababab; border-left: 0; }
.hscroll .right { margin-left: auto; }

/* Status bar */
.status { flex: none; height: 22px; background: #f1f1f1; border-top: 1px solid #c6c6c6; display: flex; align-items: center; gap: 19px; padding: 0 17px 0 7px; }
.status > span, .status .pc { padding-bottom: 3px; }
.macro { margin-left: -2px; }
.views { display: flex; align-self: stretch; margin-left: auto; margin-right: -11px; }
.views button { width: 38px; }
.views .on { background: #c6c6c6; }
.status .z { margin: 0 -15px 0 -6px; }
.status .z, .status .pc { position: relative; z-index: 2; }
.zoom { appearance: none; width: 100px; height: 14px; margin-right: -8px; background: linear-gradient(#999, #999) 0 50% / 100% 1px no-repeat, linear-gradient(#999, #999) 50% 50% / 1px 7px no-repeat; }
.zoom::-webkit-slider-thumb { appearance: none; width: 4px; height: 11px; background: #555; }
.status .pc { margin-left: 12px; }
.desk { flex: none; height: 3px; border-top: 1px solid #217346; background: #20303c; }
.desk span { display: block; width: 160px; height: 2px; margin-left: 36%; background: #56626c; }

/* Floating input-method bar */
.ime { position: absolute; left: 565px; bottom: 17px; height: 25px; display: flex; align-items: center; gap: 8px; padding-right: 4px; background: #fff; border: 1px solid #b5cfe8; border-left: 0; }
.slogo { margin: 0 -4px 0 -2px; }

/* Site watermark */
.mark { position: absolute; right: 10px; bottom: 7px; display: flex; align-items: center; opacity: .75; }
.mark div { display: flex; flex-direction: column; }
.mark b { font-size: 21px; line-height: 24px; font-weight: 500; color: #3f82c4; }
.mark em { font: 700 16px/18px "Liberation Sans", sans-serif; color: #55b96c; }
```
